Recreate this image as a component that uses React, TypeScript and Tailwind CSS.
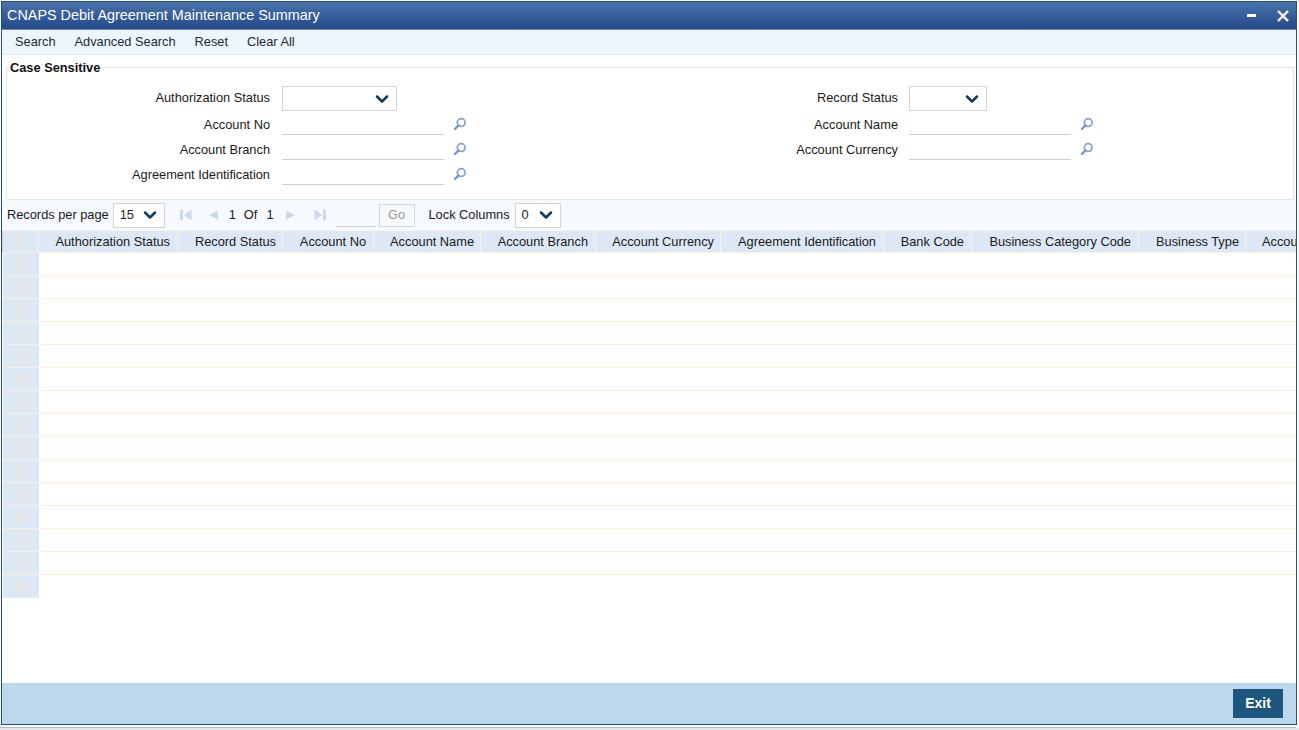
import { ChevronDown } from "lucide-react"

const leftFields = ["Account No", "Account Branch", "Agreement Identification"]

const rightFields = ["Account Name", "Account Currency"]

const columns = [
  { label: "Authorization Status", cell: "w-[139px] pr-[7px]" },
  { label: "Record Status", cell: "w-[105px] pr-[6px]" },
  { label: "Account No", cell: "w-[91px] pr-[7px]" },
  { label: "Account Name", cell: "w-[107px] pr-[6px]" },
  { label: "Account Branch", cell: "w-[115px] pr-[7px]" },
  { label: "Account Currency", cell: "w-[125px] pr-[6px]" },
  { label: "Agreement Identification", cell: "w-[163px] pr-[7px]" },
  { label: "Bank Code", cell: "w-[88px] pr-[7px]" },
  { label: "Business Category Code", cell: "w-[167px] pr-[7px]" },
  { label: "Business Type", cell: "w-[107px] pr-[6px]" },
]

const rows = Array.from({ length: 15 }, (_, i) => i)

function SearchIcon() {
  return (
    <svg width="14" height="14" viewBox="0 0 14 14" fill="none" className="shrink-0">
      <circle cx="8.2" cy="5.6" r="3.9" stroke="#7fa3d9" strokeWidth="1.7" />
      <path d="M5.4 8.4 L1.9 12" stroke="#6d94cf" strokeWidth="2.2" strokeLinecap="round" />
    </svg>
  )
}

function Select({ width, value }: { width: string; value?: string }) {
  return (
    <div className={`flex h-[25px] ${width} items-center justify-between border border-[#d5d5d5] bg-white pl-[6px] pr-[4px] text-[#222]`}>
      <span>{value}</span>
      <ChevronDown className="size-[20px] text-[#0d3a66]" strokeWidth={3} />
    </div>
  )
}

function LookupField({ label, labelClass }: { label: string; labelClass: string }) {
  return (
    <div className="flex h-[25px] items-center">
      <label className={`mt-[5px] w-[275px] ${labelClass} text-right text-[#1a1a1a]`}>{label}</label>
      <div className="h-[25px] w-[162px] border-b border-[#cfcfcf]" />
      <div className="ml-[9px] mt-[3px]">
        <SearchIcon />
      </div>
    </div>
  )
}

function PagerArrow({ d }: { d: string }) {
  return (
    <svg width="14" height="14" viewBox="0 0 14 14" fill="#c9d9ef" className="shrink-0">
      <path d={d} />
    </svg>
  )
}

export default function App() {
  return (
    <div className="h-[730px] w-[1299px] overflow-hidden bg-white font-['Liberation_Sans',Arial,sans-serif] text-[12.8px]">
      <div className="ml-px mt-px flex h-[724px] w-[1296px] flex-col border border-[#254a8c]">
        <header className="flex h-[28px] shrink-0 items-center justify-between border-b border-[#6f8aa8] bg-gradient-to-b from-[#4a72ab] to-[#244a8a] pl-[5px] pr-[7px] text-[14.4px] text-white">
          <span>CNAPS Debit Agreement Maintenance Summary</span>
          <div className="flex items-center gap-[21px]">
            <div className="h-[3px] w-[9px] bg-white" />
            <svg width="12" height="12" viewBox="0 0 12 12" stroke="white" strokeWidth="2.4">
              <path d="M1 1 L11 11 M11 1 L1 11" />
            </svg>
          </div>
        </header>

        <nav className="flex h-[25px] shrink-0 items-center gap-[19px] border-b border-[#e4eaf2] bg-[#edf5fd] pl-[13px] text-[#1c2a3a]">
          <span>Search</span>
          <span>Advanced Search</span>
          <span>Reset</span>
          <span>Clear All</span>
        </nav>

        <fieldset className="ml-[4px] mr-[2px] mt-[4px] h-[141px] shrink-0 border border-[#e1e6ee] pl-0">
          <legend className="ml-[3px] pt-[2px] font-bold leading-[14px] text-[#111]">Case Sensitive</legend>
          <div className="mt-[11px] flex">
            <div className="w-[627px]">
              <div className="flex h-[25px] items-center">
                <label className="mb-[2px] w-[275px] pr-3 text-right text-[#1a1a1a]">Authorization Status</label>
                <Select width="w-[115px]" />
              </div>
              <div className="-mt-[1px]">
                {leftFields.map((label) => (
                  <LookupField key={label} label={label} labelClass="pr-3" />
                ))}
              </div>
            </div>
            <div>
              <div className="flex h-[25px] items-center">
                <label className="mb-[2px] w-[275px] pr-[11px] text-right text-[#1a1a1a]">Record Status</label>
                <Select width="w-[78px]" />
              </div>
              <div className="-mt-[1px]">
                {rightFields.map((label) => (
                  <LookupField key={label} label={label} labelClass="pr-[11px]" />
                ))}
              </div>
            </div>
          </div>
        </fieldset>

        <div className="flex h-[30px] shrink-0 items-center bg-[#f6f9fe] pl-[5px] text-[#1a1a1a]">
          <span>Records per page</span>
          <div className="ml-[4px]">
            <Select width="w-[52px]" value="15" />
          </div>
          <div className="ml-[14px] flex items-center gap-[13px]">
            <PagerArrow d="M1 1.5 H4 V12.5 H1 Z M12.5 1.5 V12.5 L5 7 Z" />
            <PagerArrow d="M12 2.5 V11.5 L3 7 Z" />
          </div>
          <span className="ml-[9px]">1</span>
          <span className="ml-[8px]">Of</span>
          <span className="ml-[9px]">1</span>
          <div className="ml-[10px] flex items-center gap-[15px]">
            <PagerArrow d="M2 2.5 V11.5 L11 7 Z" />
            <PagerArrow d="M1.5 1.5 V12.5 L9 7 Z M10 1.5 H13 V12.5 H10 Z" />
          </div>
          <div className="ml-[9px] h-[24px] w-[40px] border-b border-[#cfcfcf]" />
          <button className="ml-[3px] h-[23px] w-[36px] border border-[#cfd6de] bg-[#f7f9fb] text-[#9a9a9a]">Go</button>
          <span className="ml-[14px]">Lock Columns</span>
          <div className="ml-[5px]">
            <Select width="w-[46px]" value="0" />
          </div>
        </div>

        <div className="min-h-0 flex-1 overflow-hidden bg-white">
          <div className="flex h-[23px] w-[1400px] border-y border-[#fdf0dc] bg-[#dde8f7] text-[#1a1a1a]">
            <div className="flex w-[37px] shrink-0 items-center justify-center border-l border-r border-l-[#c9ced8] border-r-[#fdf0dc]">
              <div className="size-[15px] bg-[#e3e6ec]" />
            </div>
            {columns.map((c) => (
              <div key={c.label} className={`flex ${c.cell} shrink-0 items-center justify-end border-r border-[#fdf0dc]`}>
                {c.label}
              </div>
            ))}
            <div className="flex shrink-0 items-center pl-[16px]">Account Type</div>
          </div>
          {rows.map((r) => (
            <div key={r} className={`flex h-[23px] ${r < 14 ? "border-b border-[#fdf0dc]" : ""}`}>
              <div className="ml-px flex w-[36px] shrink-0 items-center justify-center bg-[#dde8f7]">
                <div className="size-[15px] bg-[#e3e6ec]" />
              </div>
            </div>
          ))}
        </div>

        <footer className="flex h-[41px] shrink-0 items-center justify-end bg-[#bdd7ec] pr-[13px]">
          <button className="h-[29px] w-[50px] bg-[#1d567e] text-[14px] font-bold text-white">Exit</button>
        </footer>
      </div>
      <div className="mt-[2px] h-px w-[1296px] bg-[#b4bacb]" />
      <div className="h-[2px] w-full bg-[#e3e6ec]" />
    </div>
  )
}
